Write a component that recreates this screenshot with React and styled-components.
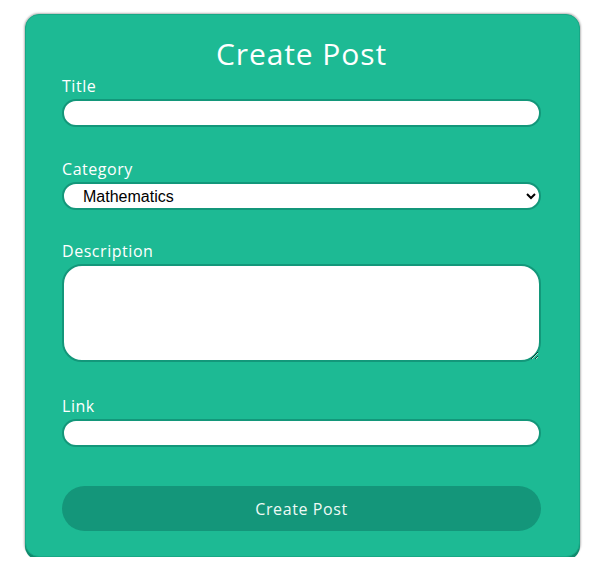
import React from "react";
import styled, { createGlobalStyle } from "styled-components";

const Global = createGlobalStyle`
  html, body { margin: 0; padding: 0; background: #ffffff; }
  body { font-family: "Open Sans", "Noto Sans", sans-serif; }
  * { box-sizing: border-box; }
`;

const Page = styled.div`
  padding: 14px 11px 0 25px;
`;

const Card = styled.form`
  width: 555px;
  height: 543px;
  background: #1dba94;
  border-radius: 14px;
  border: 1px solid #17a886;
  box-shadow: 0 3px 0 #0f8b6d, 0 0 2px 1px rgba(0, 0, 0, 0.28);
  padding: 21px 38px 0 36px;
  display: flex;
  flex-direction: column;
`;

const Heading = styled.h1`
  margin: 0 0 4px;
  text-align: center;
  font-family: "Open Sans", sans-serif;
  font-weight: 400;
  font-size: 30px;
  line-height: 36px;
  color: #ffffff;
  letter-spacing: 0.9px;
`;

const Field = styled.div`
  display: flex;
  flex-direction: column;
  margin-bottom: ${(p) => p.$gap}px;
`;

const Label = styled.label`
  font-family: "Open Sans", sans-serif;
  font-size: 16px;
  line-height: 20px;
  color: #ffffff;
  margin-bottom: 3px;
  letter-spacing: 0.55px;
`;

const Input = styled.input`
  width: 100%;
  height: 28px;
  border: 2px solid #13977a;
  border-radius: 14px;
  background: #ffffff;
  outline: none;
  padding: 0 12px;
  font-size: 16px;
`;

const Select = styled.select`
  width: 100%;
  height: 28px;
  border: 2px solid #13977a;
  border-radius: 14px;
  background: #ffffff;
  outline: none;
  padding: 0 6px 0 15px;
  font-family: "Liberation Sans", Arial, sans-serif;
  font-size: 16px;
  color: #000;
`;

const TextArea = styled.textarea`
  display: block;
  width: 100%;
  height: 98px;
  border: 2px solid #13977a;
  border-radius: 20px;
  background: #ffffff;
  outline: none;
  padding: 8px 12px;
  font-size: 16px;
  resize: vertical;
`;

const Button = styled.button`
  width: 100%;
  height: 45px;
  border: none;
  border-radius: 23px;
  background: #14967a;
  color: #eefaf6;
  font-family: "Open Sans", sans-serif;
  font-size: 16px;
  letter-spacing: 0.6px;
  cursor: pointer;
`;

export default function App() {
  return (
    <>
      <Global />
      <Page>
        <Card onSubmit={(e) => e.preventDefault()}>
          <Heading>Create Post</Heading>
          <Field $gap={32}>
            <Label>Title</Label>
            <Input type="text" />
          </Field>
          <Field $gap={31}>
            <Label>Category</Label>
            <Select defaultValue="Mathematics">
              <option>Mathematics</option>
              <option>Physics</option>
              <option>Chemistry</option>
            </Select>
          </Field>
          <Field $gap={34}>
            <Label>Description</Label>
            <TextArea />
          </Field>
          <Field $gap={39}>
            <Label>Link</Label>
            <Input type="text" />
          </Field>
          <Button type="submit">Create Post</Button>
        </Card>
      </Page>
    </>
  );
}
